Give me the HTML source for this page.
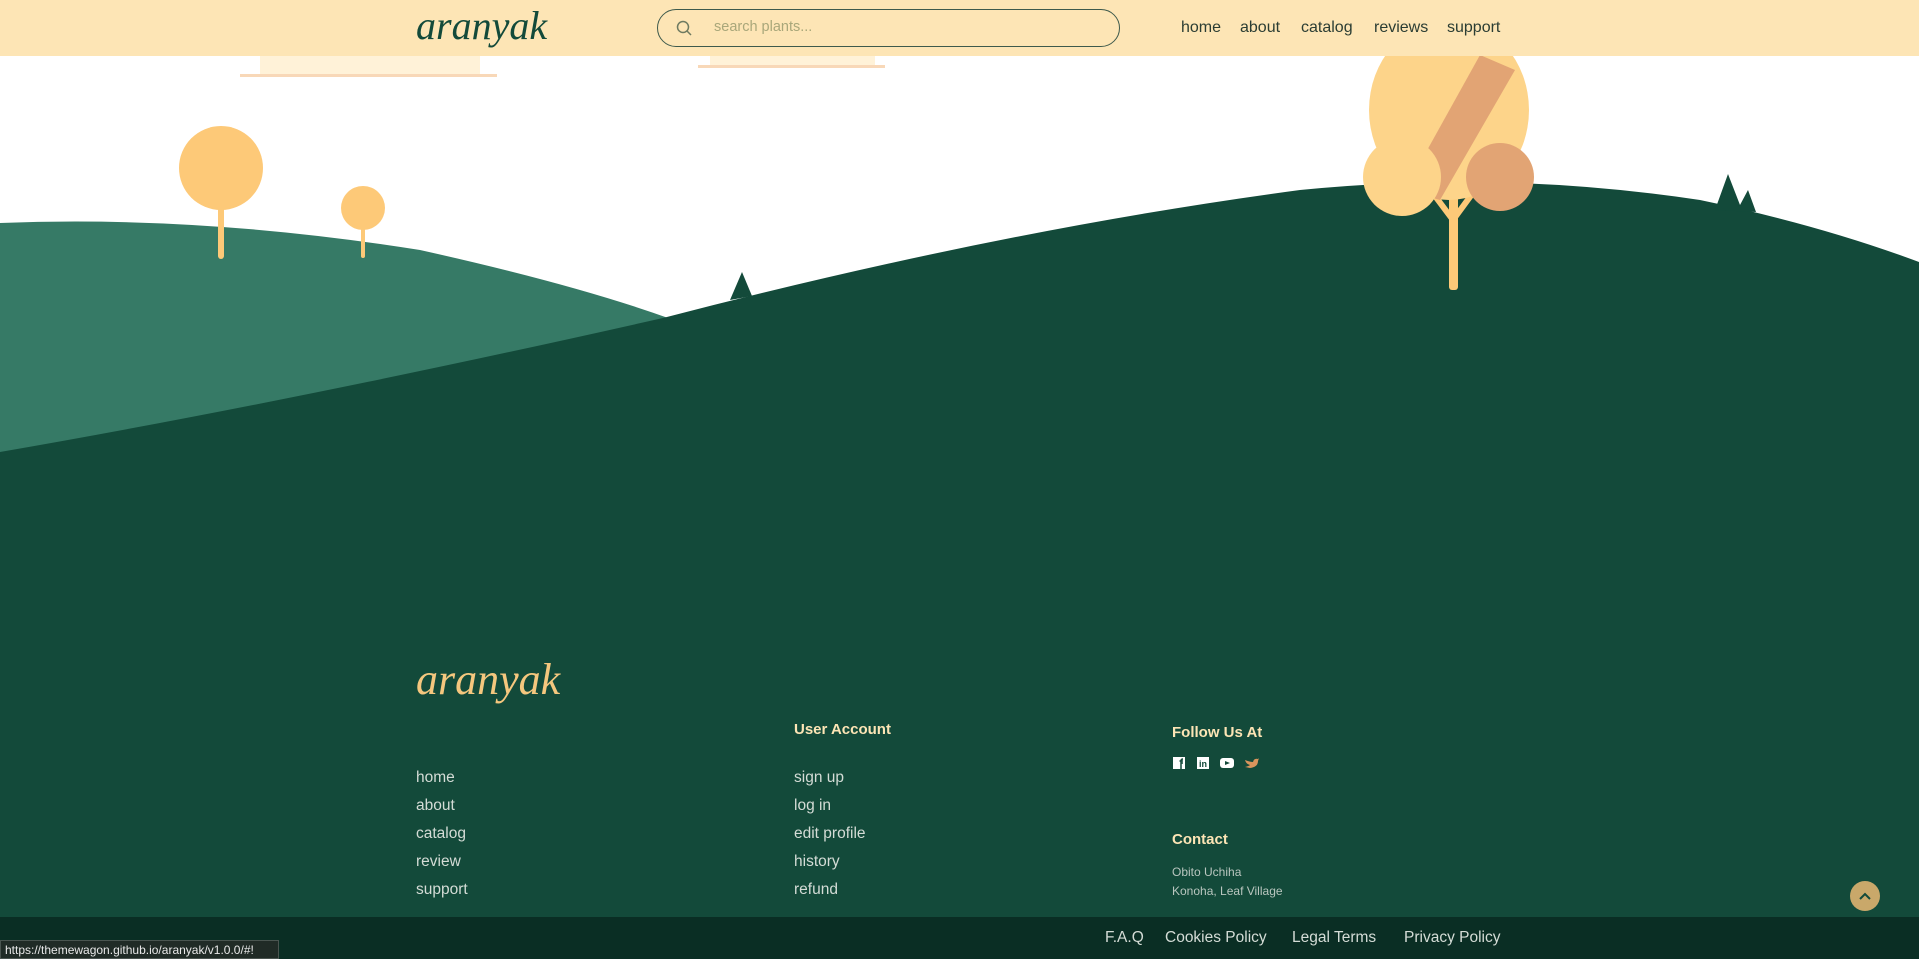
<!DOCTYPE html>
<html><head><meta charset="utf-8"><style>
*{margin:0;padding:0;box-sizing:border-box}
body{width:1919px;height:959px;overflow:hidden;position:relative;background:#fff;font-family:"Liberation Sans",sans-serif}
.a{position:absolute;white-space:nowrap}
.hdr{position:absolute;left:0;top:0;width:1919px;height:56px;background:#fde5b5}
.logo{font-family:"Liberation Serif",serif;font-style:italic;letter-spacing:0px}
.nav{font-size:16px;color:#2b3d33;top:18px}
.fl{font-size:15.5px;color:#d4dcd6}
.fh{font-size:15px;font-weight:bold;color:#fde5b5}
.bl{font-size:15.5px;color:#d4dcd6;top:929px}
</style></head><body>
<svg class="a" style="left:0;top:0" width="1919" height="959">
<rect x="240" y="74" width="257" height="3" fill="#f8d8b8"/>
<rect x="260" y="56" width="220" height="18" fill="#fff2d8"/>
<rect x="698" y="65" width="187" height="3" fill="#f8d8b8"/>
<rect x="710" y="56" width="165" height="9" fill="#fff2d8"/>
<path d="M0 223 Q200 215 420 250 Q600 290 700 330 L700 500 L0 500Z" fill="#367a66"/>
<path d="M0 452 Q300 400 663 318 Q1000 230 1300 190 Q1500 170 1700 200 Q1820 225 1919 262 L1919 959 L0 959Z" fill="#134a3a"/>
<path d="M730 300 L742 272 L752 296Z" fill="#134a3a"/>
<path d="M1715 210 L1728 174 L1740 205 L1748 190 L1756 212Z" fill="#134a3a"/>
<rect x="218" y="168" width="6" height="91" rx="3" fill="#fdc978"/>
<circle cx="221" cy="168" r="42" fill="#fdc978"/>
<rect x="361" y="208" width="4" height="50" rx="2" fill="#fdc978"/>
<circle cx="363" cy="208" r="22" fill="#fdc978"/>
<rect x="1449" y="184" width="9" height="106" rx="3" fill="#fdc978"/>
<path d="M1453 220 L1432 192 M1453 220 L1475 190" stroke="#fdc978" stroke-width="6"/>
<ellipse cx="1449" cy="110" rx="80" ry="90" fill="#fdd48a"/>
<path d="M1480 55 L1515 70 L1440 200 L1405 190Z" fill="#e2a474"/>
<circle cx="1402" cy="177" r="39" fill="#fdd48a"/>
<circle cx="1500" cy="177" r="34" fill="#e2a474"/>
<rect x="0" y="917" width="1919" height="42" fill="#0a2e24"/>
<circle cx="1865" cy="896" r="15" fill="#c9a86a"/>
<path d="M1860 899 L1865 894 L1870 899" stroke="#134a3a" stroke-width="2" fill="none"/>
</svg>
<div class="hdr"></div>
<div class="a logo" style="left:416px;top:2px;font-size:40px;color:#134a3a">aranyak</div>
<div class="a" style="left:657px;top:9px;width:463px;height:38px;border:1.5px solid #3e5a4c;border-radius:20px"></div>
<svg class="a" style="left:676px;top:20px" width="16" height="16"><circle cx="7" cy="7" r="5.5" stroke="#6e7a60" stroke-width="1.5" fill="none"/><path d="M11 11 L15 15" stroke="#6e7a60" stroke-width="1.5"/></svg>
<div class="a" style="left:714px;top:19px;font-size:14.5px;color:#a9a77a">search plants...</div>
<div class="a nav" style="left:1181px;top:19px">home</div>
<div class="a nav" style="left:1240px;top:19px">about</div>
<div class="a nav" style="left:1301px;top:19px">catalog</div>
<div class="a nav" style="left:1374px;top:19px">reviews</div>
<div class="a nav" style="left:1447px;top:19px">support</div>
<div class="a logo" style="left:416px;top:654px;font-size:44px;color:#f5c77e">aranyak</div>
<div class="a fh" style="left:794px;top:721px">User Account</div>
<div class="a fh" style="left:1172px;top:724px">Follow Us At</div>
<div class="a fh" style="left:1172px;top:831px">Contact</div>
<div class="a fl" style="left:416px;top:769px">home</div>
<div class="a fl" style="left:416px;top:797px">about</div>
<div class="a fl" style="left:416px;top:825px">catalog</div>
<div class="a fl" style="left:416px;top:853px">review</div>
<div class="a fl" style="left:416px;top:881px">support</div>
<div class="a fl" style="left:794px;top:769px">sign up</div>
<div class="a fl" style="left:794px;top:797px">log in</div>
<div class="a fl" style="left:794px;top:825px">edit profile</div>
<div class="a fl" style="left:794px;top:853px">history</div>
<div class="a fl" style="left:794px;top:881px">refund</div>
<svg class="a" style="left:1172px;top:756px" width="90" height="16">
<rect x="1" y="1" width="12" height="12" fill="#fff"/><path d="M9 13 V7 H11 M7.5 5 H11 M9 13 V5 Q9 3 11 3" stroke="#134a3a" stroke-width="1.5" fill="none"/>
<rect x="25" y="1" width="12" height="12" fill="#fff"/><text x="27" y="11" font-size="9" font-weight="bold" fill="#134a3a" font-family="Liberation Sans">in</text>
<rect x="48" y="2" width="14" height="10" rx="3" fill="#fff"/><path d="M53 5 L58 7 L53 9Z" fill="#134a3a"/>
<path d="M73 4 Q78 6 81 6 Q82 2 86 3 L87 2 L86 5 Q86 11 78 12 L73 11 Q77 10 78 9 Q74 8 73 4Z" fill="#d9955c"/>
</svg>
<div class="a" style="left:1172px;top:865px;font-size:12px;color:#b9c6bf">Obito Uchiha</div>
<div class="a" style="left:1172px;top:884px;font-size:12px;color:#b9c6bf">Konoha, Leaf Village</div>
<div class="a bl" style="left:1105px">F.A.Q</div>
<div class="a bl" style="left:1165px">Cookies Policy</div>
<div class="a bl" style="left:1292px">Legal Terms</div>
<div class="a bl" style="left:1404px">Privacy Policy</div>
<div class="a" style="left:0;top:940px;width:279px;height:19px;background:#202b26;border:1px solid #4a5550;color:#e8e8e8;font-size:12px;padding:2px 4px">https://themewagon.github.io/aranyak/v1.0.0/#!</div>
</body></html>
